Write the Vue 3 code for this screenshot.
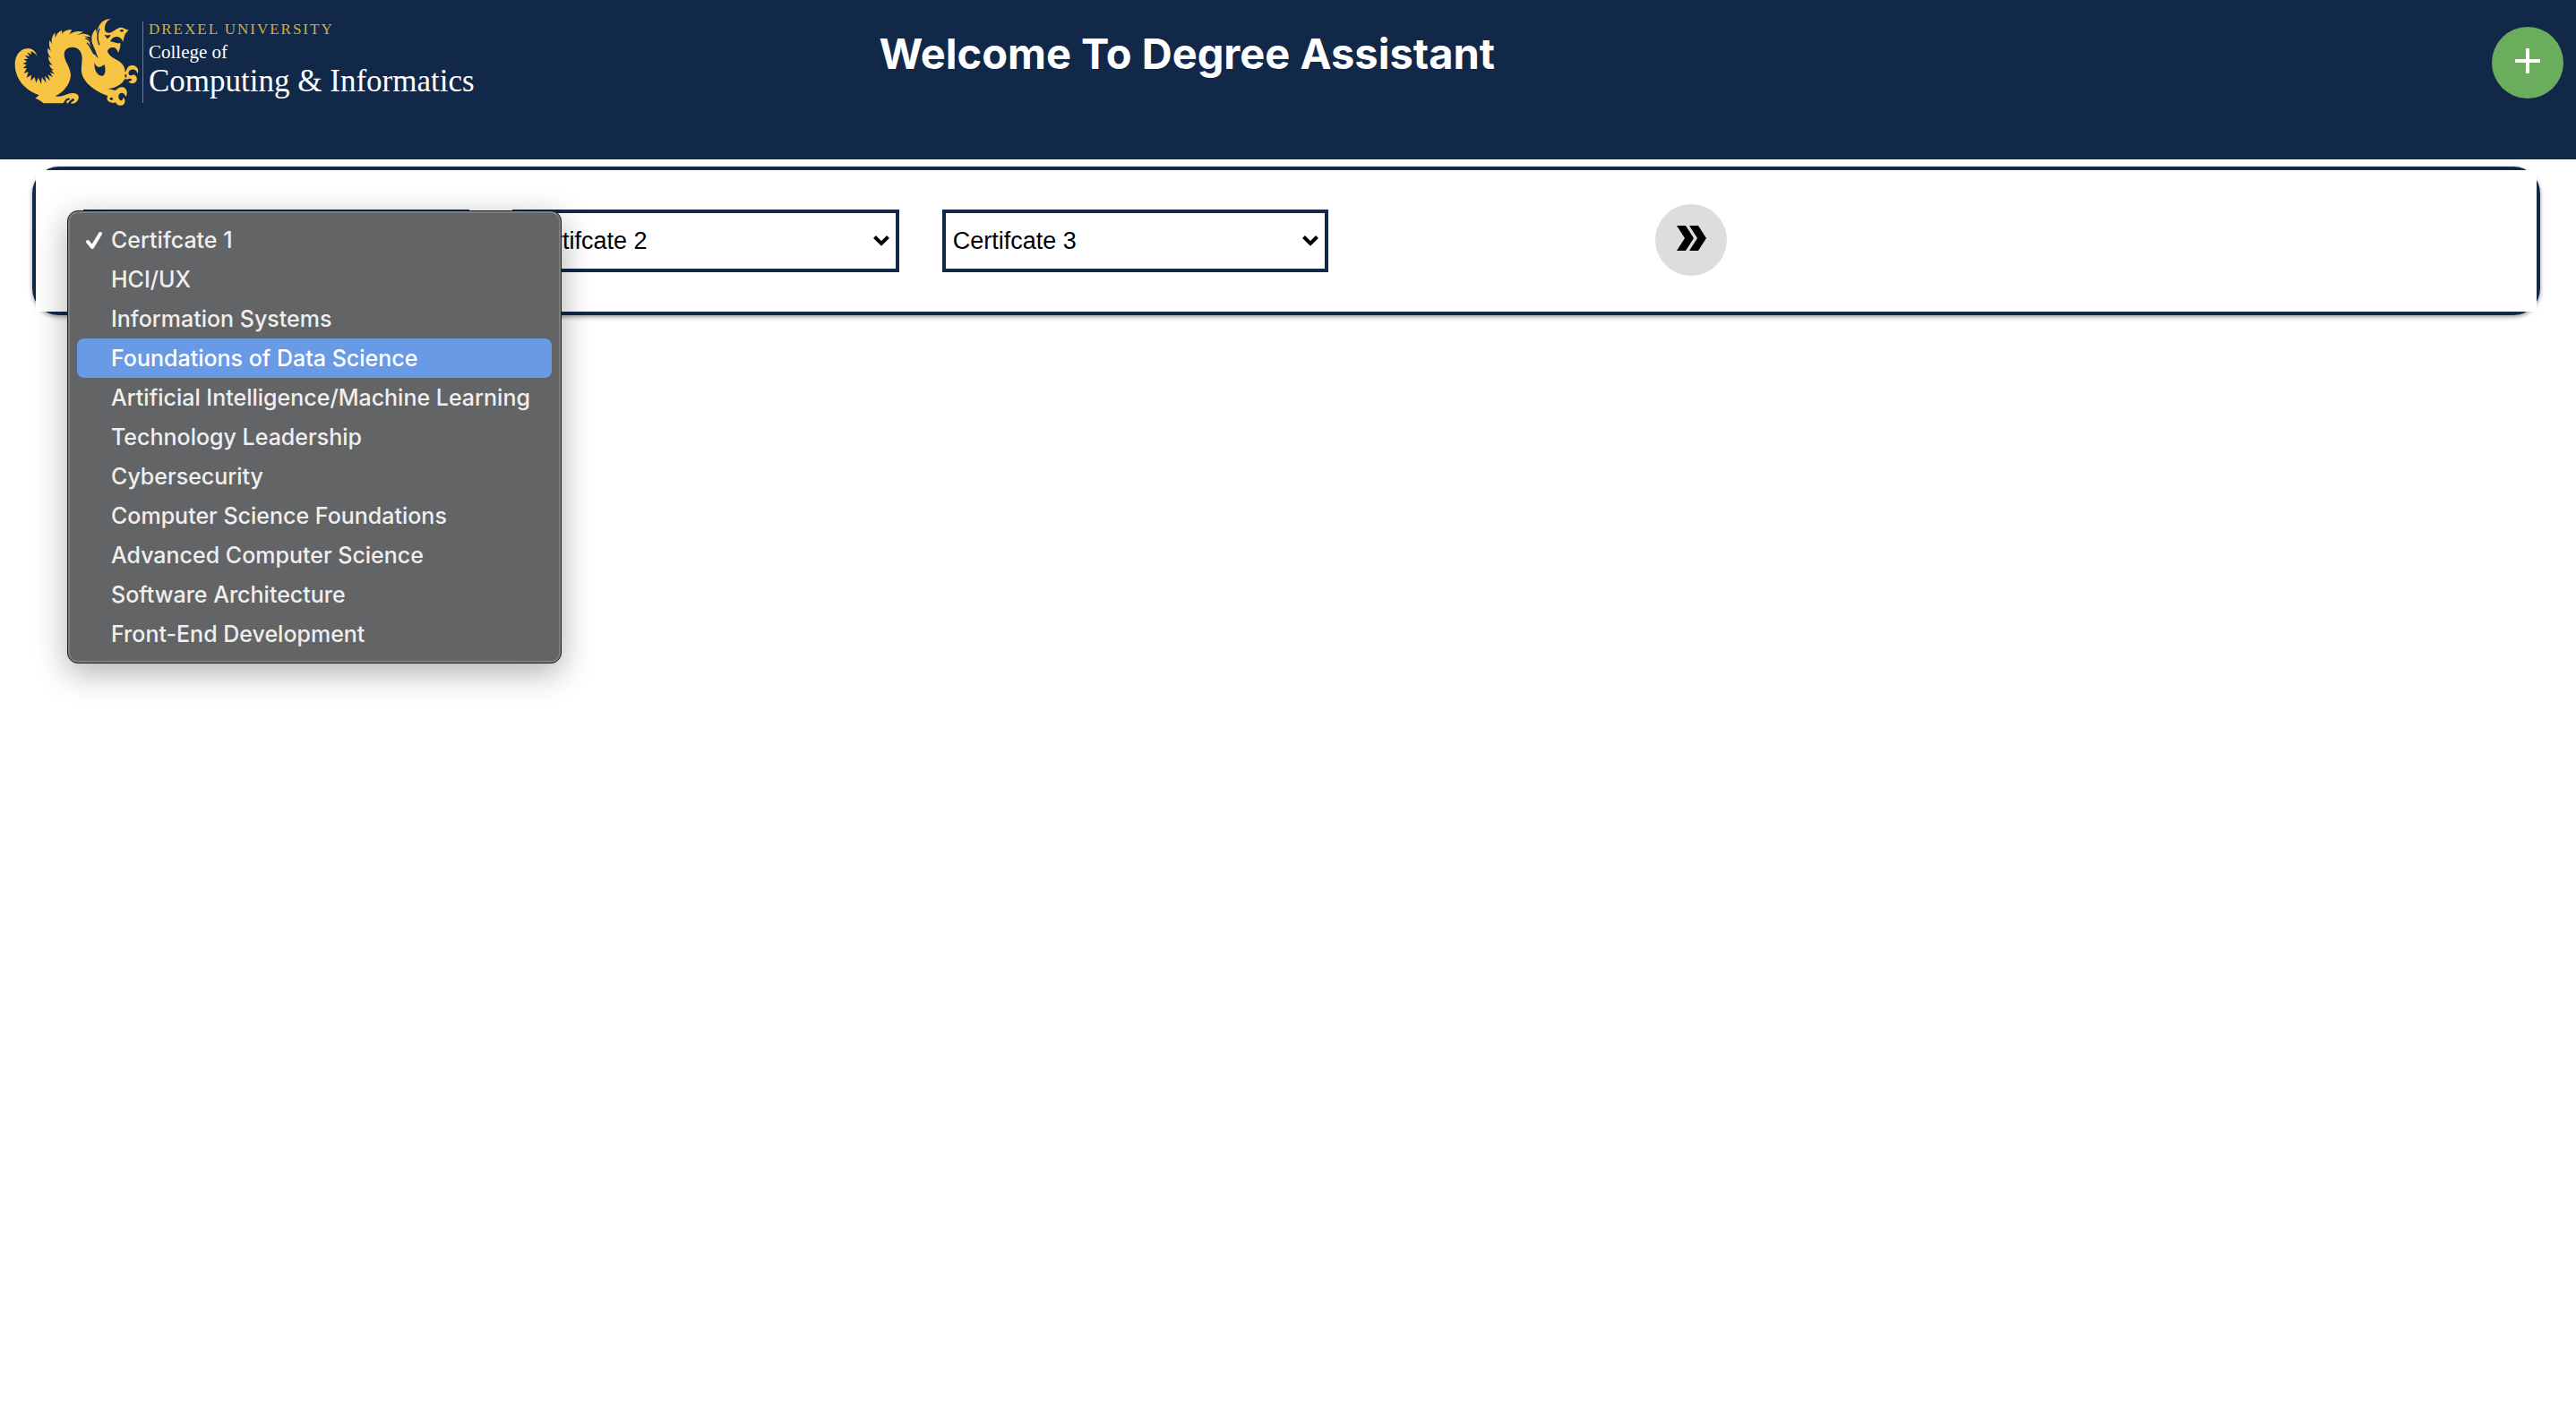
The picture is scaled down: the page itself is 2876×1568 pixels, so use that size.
<script setup>
import { ref } from 'vue';

const certificates = [
    'HCI/UX',
    'Information Systems',
    'Foundations of Data Science',
    'Artificial Intelligence/Machine Learning',
    'Technology Leadership',
    'Cybersecurity',
    'Computer Science Foundations',
    'Advanced Computer Science',
    'Software Architecture',
    'Front-End Development'
];

const slots = ref([
    { id: 'cert-1', label: 'Certifcate 1', value: '' },
    { id: 'cert-2', label: 'Certifcate 2', value: '' },
    { id: 'cert-3', label: 'Certifcate 3', value: '' }
]);

const openSlot = ref('cert-1');
const highlighted = ref('Foundations of Data Science');

const pick = (slot, value) => {
    slot.value = value;
    openSlot.value = '';
};

const optionsFor = (slot) => [
    { text: slot.label, value: '' },
    ...certificates.map(name => ({ text: name, value: name }))
];
</script>

<template>
    <div class="page">
        <header class="top-bar">
            <a href="#" class="logo">
                <svg class="dragon" viewBox="48 63 420 297" aria-hidden="true">
                    <path
                        class="gold"
                        d="M125 192 C120 174 108 165 93 165 C67 166 50 189 50 218 C50 259 77 304 131 321
                        L118 333 C127 334 134 340 146 349 L210 349 C218 345 216 335 226 333
                        C235 331 238 335 230 338 C221 340 220 347 228 350 C230 343 237 340 243 333
                        C252 333 251 342 239 345 L238 350 C253 353 266 338 263 325 C258 313 241 314 227 318
                        C211 324 200 329 184 325 C208 316 234 288 237 257 C238 231 215 208 215 186
                        C215 170 226 161 243 161 C263 161 275 177 275 198 C275 216 271 229 273 244
                        C278 280 319 310 361 324 C355 333 360 343 370 346 C378 350 386 347 389 346
                        C388 356 405 360 414 353 C421 346 420 334 412 330 C412 338 407 343 402 338
                        C395 332 395 321 402 316 C410 311 419 317 421 328 C430 315 425 299 412 295
                        C400 294 394 300 388 305 C379 306 370 302 361 300 C387 299 410 285 418 267
                        C427 272 433 263 439 267 C446 270 438 275 430 276 C437 285 450 284 456 276
                        C462 267 457 257 448 253 C439 258 431 256 430 248 C431 239 440 234 449 236
                        C457 238 459 244 460 250 C467 239 460 225 448 223 C439 221 431 223 427 230
                        C423 236 424 240 419 244 C419 220 402 209 386 201 C369 192 362 183 360 175
                        C364 161 374 162 383 162 C388 164 393 170 396 180 C400 170 405 158 403 147
                        C393 151 384 144 369 142 C374 133 380 125 393 126 C404 128 409 135 413 144
                        C412 134 417 127 419 117 L431 103 C421 104 416 94 402 95 C389 99 380 109 367 113
                        C355 114 349 106 351 96 C352 80 361 70 373 66 C354 65 337 76 330 94
                        C325 104 325 111 325 119 L321 100 C315 107 307 117 307 133
                        C307 153 316 163 321 176 C324 185 325 190 330 198 C318 192 312 177 305 163
                        L299 145 L306 150 C302 136 292 127 280 124 L304 127 C296 116 279 112 257 121
                        L279 110 C259 105 244 110 232 118 L241 103 C223 101 211 109 207 117 L208 104
                        C195 109 188 119 185 130 L184 112 C175 125 171 135 174 150 L166 137
                        C163 151 165 161 171 174 L160 164 C158 181 164 189 173 199 L162 193
                        C162 207 169 216 177 221 L165 219 C168 231 177 237 184 238 L171 238
                        L183 251 L168 246 L177 262 L160 253 L168 274 L150 257 L155 281 L140 262
                        L138 284 L128 263 L121 281 L116 261 L103 274 L105 254 L89 263 L95 244
                        L80 248 L90 232 L77 231 L89 221 L77 215 L91 210 L79 201 L94 200
                        L83 188 L99 192 L91 178 L105 186 L103 175 C113 178 120 184 125 192 Z"
                    />
                    <g class="cut">
                        <path d="M316 212 C321 226 329 229 336 227 L350 220 C354 237 354 253 344 257 C328 258 315 241 316 212 Z" />
                        <path d="M350 119 C359 123 365 121 370 119 C370 125 363 130 359 133 C357 127 353 127 350 119 Z" />
                        <ellipse cx="408" cy="106" rx="6" ry="4" />
                        <ellipse cx="421" cy="257" rx="3" ry="6" />
                        <ellipse cx="373" cy="334" rx="5" ry="5" />
                    </g>
                    <path class="vein" d="M286 131 C300 136 307 148 312 161 M291 146 C304 157 306 172 316 185 M333 98 C326 116 326 139 333 154" />
                </svg>
                <span class="wordmark">
                    <span class="university">DREXEL UNIVERSITY</span>
                    <span class="college">College of</span>
                    <span class="department">Computing &amp; Informatics</span>
                </span>
            </a>
            <h1 class="title">Welcome To Degree Assistant</h1>
            <button type="button" class="round-btn add-btn" aria-label="Add">
                <svg viewBox="0 0 28 28" width="28" height="28" aria-hidden="true">
                    <path d="M12 0h4v12h12v4H16v12h-4V16H0v-4h12z" fill="#fff" />
                </svg>
            </button>
        </header>

        <main class="panel">
            <div class="panel-body">
                <div v-for="slot in slots" :key="slot.id" class="picker">
                    <select
                        :id="slot.id"
                        v-model="slot.value"
                        class="picker-select"
                        :aria-label="slot.label"
                    >
                        <option v-for="option in optionsFor(slot)" :key="option.value" :value="option.value">
                            {{ option.text }}
                        </option>
                    </select>
                    <svg class="chevron" viewBox="0 0 18 12" aria-hidden="true">
                        <path d="M1.500 1.500 L9 9 L16.500 1.500" fill="none" stroke="#000" stroke-width="4" />
                    </svg>
                    <ul v-if="openSlot === slot.id" class="menu" role="listbox" :aria-label="slot.label">
                        <li
                            v-for="option in optionsFor(slot)"
                            :key="option.value"
                            role="option"
                            :aria-selected="slot.value === option.value"
                            :class="['menu-item', { active: highlighted === option.text }]"
                            @mouseenter="highlighted = option.text"
                            @click="pick(slot, option.value)"
                        >
                            <span class="tick">
                                <svg v-if="slot.value === option.value" viewBox="0 0 20 20" width="20" height="20" aria-hidden="true">
                                    <path d="M4 12 L9 18 L18 3" />
                                </svg>
                            </span>
                            {{ option.text }}
                        </li>
                    </ul>
                </div>
                <button type="button" class="round-btn next-btn" aria-label="Next">
                    <svg viewBox="0 0 33 28" width="33" height="28" aria-hidden="true">
                        <path d="M0 0h10l9 14-9 14H0l9-14z" />
                        <path d="M14 0h10l9 14-9 14H14l9-14z" />
                    </svg>
                </button>
            </div>
        </main>
    </div>
</template>

<style>
body {
    margin: 0;
    background-color: #fff;
}
</style>

<style scoped>
.page {
    min-height: 100vh;
    font-family: Inter, Roboto, sans-serif;
}

.top-bar {
    display: grid;
    grid-template-columns: 30% 32% 1fr;
    align-items: start;
    box-sizing: border-box;
    min-height: 178px;
    padding: 20px 14px 0 16px;
    background-color: #112849;
}

.logo {
    display: flex;
    color: #fff;
    text-decoration: none;
}

.dragon {
    width: 140px;
    height: 99px;
}

.gold {
    fill: #f8c444;
}

.cut {
    fill: #112849;
}

.vein {
    fill: none;
    stroke: #112849;
    stroke-width: 4;
}

.wordmark {
    display: flex;
    flex-direction: column;
    height: 91px;
    margin: 4px 0 0 3px;
    padding-left: 6px;
    border-left: 1px solid #8d7a45;
    font-family: Georgia, "Liberation Serif", serif;
    white-space: nowrap;
}

.university {
    font-size: 17px;
    line-height: 18px;
    letter-spacing: 2px;
    color: #d3ae43;
}

.college {
    font-size: 21px;
    line-height: 32px;
}

.department {
    font-size: 35px;
    line-height: 34px;
}

.title {
    margin: 10px 0 0;
    font-size: 47px;
    font-weight: 700;
    line-height: 60px;
    text-align: center;
    white-space: nowrap;
    color: #fff;
}

.round-btn {
    display: flex;
    align-items: center;
    justify-content: center;
    width: 80px;
    height: 80px;
    padding: 0 0 4px;
    border: none;
    border-radius: 50%;
    cursor: pointer;
}

.add-btn {
    justify-self: end;
    margin-top: 10px;
    background-color: #6aad5c;
}

.panel {
    margin: 8px 40px 0 36px;
    border: 4px solid #112849;
    border-radius: 30px;
    box-shadow: 0 2px 5px rgba(0, 0, 0, 0.4);
}

/* square white area, clips the inside of the rounded border */
.panel-body {
    display: flex;
    align-items: center;
    gap: 48px;
    padding: 38px 53px 40px;
    background-color: #fff;
}

.picker {
    position: relative;
    width: 15vw;
    padding-top: 2px;
}

.picker-select {
    display: block;
    box-sizing: border-box;
    width: 100%;
    height: 70px;
    padding: 0 40px 0 8px;
    border: 4px solid #112849;
    border-radius: 0;
    appearance: none;
    background-color: #fff;
    font-family: Arial, "Liberation Sans", sans-serif;
    font-size: 27px;
    color: #000;
}

.chevron {
    position: absolute;
    top: 31px;
    right: 11px;
    width: 18px;
    height: 12px;
    pointer-events: none;
}

.menu {
    position: absolute;
    top: 3px;
    left: -18px;
    z-index: 2;
    box-sizing: border-box;
    width: 552px;
    margin: 0;
    padding: 10px;
    border: 1px solid #1c1c1c;
    border-radius: 12px;
    background-color: #636466;
    box-shadow: inset 0 0 0 2px #7d7e80, 0 10px 36px rgba(0, 0, 0, 0.32);
    list-style: none;
}

.menu-item {
    display: flex;
    align-items: center;
    height: 44px;
    padding: 0 0 0 8px;
    border-radius: 8px;
    font-size: 25px;
    font-weight: 500;
    white-space: nowrap;
    color: #efefef;
    cursor: default;
}

.menu-item.active {
    background-color: #689ae6;
    color: #fff;
}

.tick {
    display: flex;
    width: 30px;
}

.tick path {
    fill: none;
    stroke: #fff;
    stroke-width: 4;
    stroke-linecap: round;
    stroke-linejoin: round;
}

.next-btn {
    margin-left: 317px;
    background-color: #ddd;
}
</style>
